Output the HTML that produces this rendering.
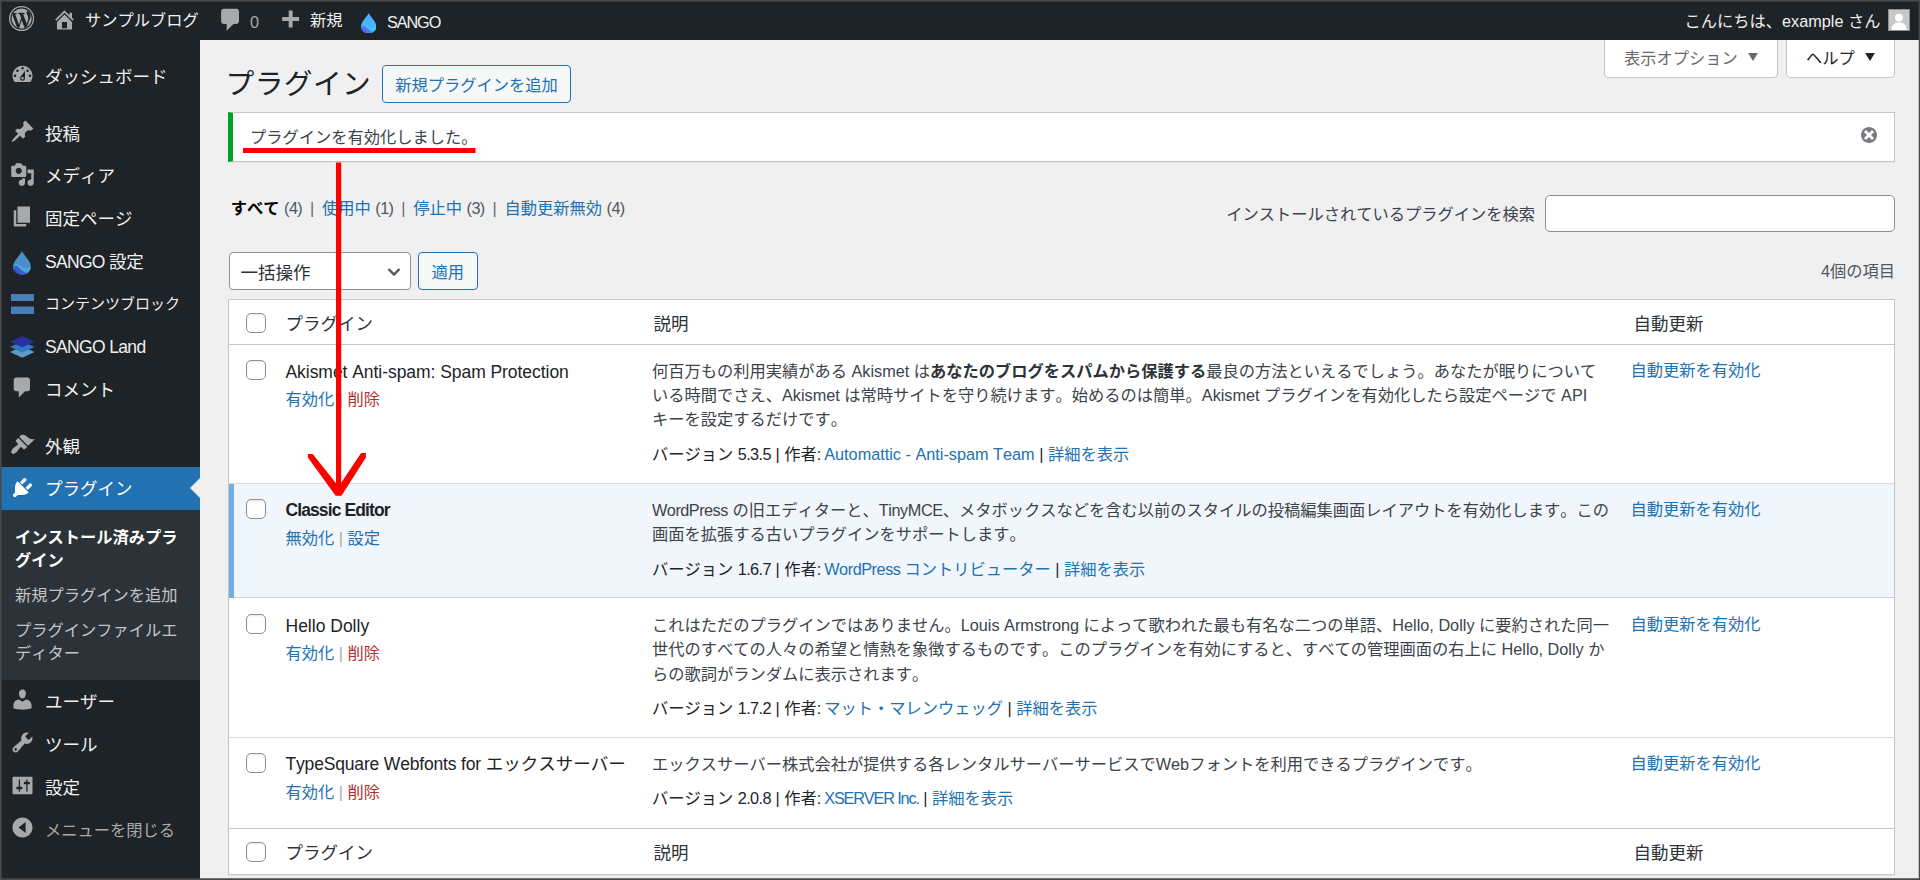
<!DOCTYPE html>
<html lang="ja">
<head>
<meta charset="utf-8">
<title>プラグイン ‹ サンプルブログ — WordPress</title>
<style>
*{box-sizing:border-box;}
html,body{margin:0;padding:0;}
body{width:1920px;height:880px;overflow:hidden;position:relative;background:#f0f0f1;color:#3c434a;
 font-family:"Liberation Sans","Noto Sans CJK JP",sans-serif;font-size:16.25px;line-height:22.75px;font-kerning:none;}
a{color:#2271b1;text-decoration:none;}
svg{display:block;}
/* ---------- admin bar ---------- */
#adminbar{position:absolute;left:0;top:0;width:1920px;height:40px;background:#1d2327;color:#f0f0f1;font-size:16.25px;line-height:40px;white-space:nowrap;}
#adminbar .ab{position:absolute;top:1.5px;height:40px;}
#adminbar svg{position:absolute;fill:#a7aaad;}
/* ---------- side menu ---------- */
#menu{position:absolute;left:0;top:40px;width:200px;height:840px;background:#1d2327;color:#f0f0f1;}
#menu ul{list-style:none;margin:15px 0 0;padding:0;}
#menu li.top{position:relative;height:42.75px;font-size:17.5px;line-height:22.75px;padding:11px 0 9px 45px;white-space:nowrap;}
#menu li.top svg{position:absolute;left:9.75px;top:7.25px;width:25px;height:25px;fill:#a7aaad;}
#menu li.sep{height:13.75px;}
#menu li.current{background:#2271b1;color:#fff;}
#menu li.current svg{fill:#fff;}
#menu li.current:after{content:"";position:absolute;right:0;top:50%;margin-top:-11px;border:10px solid transparent;border-right-color:#f0f0f1;}
#menu li.sub{background:#2c3338;padding:9.750px 0 9px;font-size:16.25px;line-height:22.75px;color:#c3c4c7;}
#menu li.sub div{padding:6.25px 15px;}
#menu li.sub div.cur{color:#fff;font-weight:700;}
#menu li.collapse{color:#a7aaad;font-size:16.25px;}
/* ---------- content ---------- */
#content{position:absolute;left:227.5px;top:40px;width:1667.5px;height:840px;}
.metalinks{position:absolute;top:0;right:0;height:36px;}
.metalinks div{position:absolute;top:0;height:37.500px;border:1px solid #c3c4c7;border-top:none;border-radius:0 0 5px 5px;background:#fff;color:#646970;font-size:16.25px;line-height:36.500px;white-space:nowrap;}
h1{position:absolute;left:-2px;top:26.250px;letter-spacing:0.400px;margin:0;font-size:28.75px;font-weight:400;line-height:37.375px;color:#1d2327;white-space:nowrap;}
.addnew{position:absolute;left:154.5px;top:25px;width:189px;height:37.5px;border:1px solid #2271b1;border-radius:4px;background:#f6f7f7;color:#2271b1;font-size:16.25px;line-height:39.500px;text-align:center;white-space:nowrap;}
.notice{position:absolute;left:0;top:72px;width:1667px;height:50px;background:#fff;border:1px solid #c3c4c7;border-left:5px solid #00a32a;box-shadow:0 1px 1px rgba(0,0,0,.04);}
.notice p{margin:0;position:absolute;left:17.5px;top:12px;line-height:24.375px;white-space:nowrap;}
.notice svg{position:absolute;right:15px;top:11.700px;width:20px;height:20px;fill:#787c82;}
.subsub{position:absolute;left:0;top:151.500px;line-height:32.5px;color:#646970;white-space:nowrap;}
.subsub b{color:#000;font-weight:700;}
.subsub .c{color:#50575e;letter-spacing:-0.550px;}
.subsub .l{padding:0 3.250px;}
.search label{position:absolute;right:360px;top:162px;line-height:25px;white-space:nowrap;}
.search div{position:absolute;right:0;top:155px;width:350px;height:36.500px;border:1px solid #8c8f94;border-radius:5px;background:#fff;}
.bulk{position:absolute;left:1px;top:212px;width:182px;height:37.5px;border:1px solid #8c8f94;border-radius:4px;background:#fff;color:#2c3338;font-size:17.5px;line-height:40px;padding-left:11px;}
.bulk svg{position:absolute;right:9px;top:11.500px;width:14px;height:14px;}
.apply{position:absolute;left:190.5px;top:212px;width:59.5px;height:37.5px;border:1px solid #2271b1;border-radius:4px;background:#f6f7f7;color:#2271b1;font-size:16.25px;line-height:38.500px;text-align:center;}
.count{position:absolute;right:0;top:220px;line-height:22.75px;color:#50575e;white-space:nowrap;}
/* table */
#tbl{position:absolute;left:0;top:259px;width:1667px;height:576px;background:#fff;border:1px solid #c3c4c7;box-shadow:0 1px 1px rgba(0,0,0,.04);}
.row{position:absolute;left:0;width:1665px;}
.row.head{border-bottom:1px solid #c3c4c7;color:#2c3338;font-size:17.5px;line-height:24.5px;}
.row.foot{border-top:1px solid #c3c4c7;color:#2c3338;font-size:17.5px;line-height:24.5px;}
.row.body{box-shadow:inset 0 -1px 0 rgba(0,0,0,.14);}
.row.active{background:#f0f6fc;border-left:5px solid #72aee6;}
.cb{position:absolute;left:17.5px;width:20px;height:20px;border:1px solid #8c8f94;border-radius:5px;background:#fff;box-shadow:inset 0 1px 2px rgba(0,0,0,.1);}
.row.active .cb{left:12.5px;}
.c1{position:absolute;left:57px;white-space:nowrap;}
.row.active .c1{left:52px;}
.c2{position:absolute;left:423.5px;width:965px;}
.row.active .c2{left:418.5px;}
.c3{position:absolute;left:1402px;white-space:nowrap;}
.row.active .c3{left:1397px;}
.name{font-size:17.5px;line-height:24.5px;color:#1d2327;margin-bottom:2px;}
.row.active .name{font-weight:700;letter-spacing:-0.900px;position:relative;top:-1.500px;}
.acts{font-size:16.25px;line-height:24.375px;color:#a7aaad;}
.acts .del{color:#b32d2e;}
.desc{font-size:16.25px;line-height:24.375px;color:#3c434a;}
.desc b{font-weight:700;color:#2c3338;}
.meta{font-size:16.25px;line-height:24.375px;color:#1d2327;white-space:nowrap;}
.meta .v{letter-spacing:-0.600px;}
.meta .au{margin-left:-1.500px;}
/* annotation + frame */
#annot{position:absolute;left:0;top:0;width:1920px;height:880px;pointer-events:none;}
#frame{position:absolute;left:0;top:0;width:1920px;height:880px;border-style:solid;border-color:#494949;border-width:1px;box-shadow:inset 1px 1px 0 rgba(74,74,74,.6),inset 0 -1px 0 rgba(74,74,74,.75),inset -1px 0 0 rgba(74,74,74,.25);pointer-events:none;}
</style>
</head>
<body>

<div id="adminbar">
  <svg style="left:8.700px;top:5.900px;width:25.200px;height:25.200px" viewBox="0 0 20 20"><defs><clipPath id="wc"><circle cx="10" cy="10" r="8.700"/></clipPath></defs><circle cx="10" cy="10" r="10"/><circle cx="10" cy="10" r="8.500" fill="none" stroke="#1d2327" stroke-width="0.900"/><g transform="translate(10 10) scale(0.905) translate(-10 -10)"><path clip-path="url(#wc)" fill="#1d2327" d="M20 10c0-5.51-4.49-10-10-10C4.48 0 0 4.49 0 10c0 5.52 4.48 10 10 10 5.51 0 10-4.48 10-10zM7.78 15.37L4.37 6.22c.55-.02 1.17-.08 1.17-.08.5-.06.44-1.13-.06-1.11 0 0-1.45.11-2.37.11-.18 0-.37 0-.58-.01C4.12 2.69 6.87 1.11 10 1.11c2.33 0 4.45.87 6.05 2.34-.68-.11-1.65.39-1.65 1.58 0 .74.45 1.36.9 2.1.35.61.55 1.36.55 2.46 0 1.49-1.4 5-1.4 5l-3.03-8.37c.54-.02.82-.17.82-.17.5-.05.44-1.25-.06-1.22 0 0-1.44.12-2.38.12-.87 0-2.33-.12-2.33-.12-.5-.03-.56 1.2-.06 1.22l.92.08 1.26 3.41zM17.41 10c.24-.64.74-1.87.43-4.25.7 1.29 1.05 2.71 1.05 4.25 0 3.29-1.73 6.24-4.4 7.78.97-2.59 1.94-5.2 2.92-7.78zM6.1 18.09C3.12 16.65 1.11 13.53 1.11 10c0-1.3.23-2.48.72-3.59C3.25 10.3 4.67 14.2 6.1 18.09zm4.03-6.63l2.58 6.98c-.86.29-1.76.45-2.71.45-.79 0-1.57-.11-2.29-.33.81-2.38 1.62-4.74 2.42-7.1z"/></g></svg>
  <svg style="left:52px;top:6.500px;width:25px;height:25px" viewBox="0 0 20 20"><path d="M16 8.5l1.53 1.53-1.06 1.06L10 4.62l-6.47 6.47-1.06-1.06L10 2.5l4 4v-2h2v4zm-6-2.46l6 5.99V18H4v-5.97zM12 17v-5H8v5h4z"/></svg>
  <span class="ab" style="left:85px;top:0.250px">サンプルブログ</span>
  <svg style="left:216.500px;top:5.500px;width:27.500px;height:27.500px" viewBox="0 0 20 20"><path d="M5 2h9c1.1 0 2 .9 2 2v7c0 1.1-.9 2-2 2h-2l-5 5v-5H5c-1.1 0-2-.9-2-2V4c0-1.1.9-2 2-2z"/></svg>
  <span class="ab" style="left:250px;color:#a7aaad">0</span>
  <svg style="left:277px;top:8px;width:26px;height:26px" viewBox="0 0 20 20"><path d="M17 7v3h-5v5H9v-5H4V7h5V2h3v5h5z"/></svg>
  <span class="ab" style="left:310px;top:0.250px">新規</span>
  <svg style="left:361px;top:12.800px;width:15.400px;height:20.400px" viewBox="0 0 30 40"><defs><clipPath id="dc"><path d="M15 0C12 7 0 17 0 26a15 14 0 0 0 30 0C30 17 18 7 15 0z"/></clipPath></defs><g clip-path="url(#dc)"><rect width="30" height="40" fill="#48b2ff"/><path d="M0 24c5-3 9-2 13 1s9 5 17 1v14H0z" fill="#3cc4fe"/><path d="M0 26c4-2 7-1 10 2s9 9 16 9l-4 3H0z" fill="#4a78f8"/><path d="M0 30c3 0 6 3 9 6l3 4H0z" fill="#4f5cf5"/></g></svg>
  <span class="ab" style="left:387px;letter-spacing:-1.100px">SANGO</span>
  <span class="ab" style="right:39.500px;top:1px">こんにちは、example さん</span>
  <div style="position:absolute;left:1888px;top:9px;width:22px;height:22px;border:1px solid #8c8f94;background:#c8c8c8;overflow:hidden">
    <svg style="left:0;top:0;width:20px;height:20px;fill:#fff" viewBox="0 0 20 20"><circle cx="10" cy="7.6" r="3.9"/><path d="M2.5 20c0-5 3-7.8 7.500-7.800S17.500 15 17.500 20z"/></svg>
  </div>
</div>

<div id="menu">
 <ul>
  <li class="top"><svg viewBox="0 0 20 20"><path d="M3.760 16h12.480c1.100-1.370 1.760-3.110 1.760-5 0-4.420-3.580-8-8-8s-8 3.580-8 8c0 1.890.66 3.630 1.760 5zM10 4c.55 0 1 .45 1 1s-.45 1-1 1-1-.45-1-1 .45-1 1-1zM6 6c.55 0 1 .45 1 1s-.45 1-1 1-1-.45-1-1 .45-1 1-1zm8 0c.55 0 1 .45 1 1s-.45 1-1 1-1-.45-1-1 .45-1 1-1zm-5.370 5.550L12 7v6c0 1.100-.9 2-2 2s-2-.9-2-2c0-.57.24-1.080.63-1.450zM4 10c.55 0 1 .45 1 1s-.45 1-1 1-1-.45-1-1 .45-1 1-1zm12 0c.55 0 1 .45 1 1s-.45 1-1 1-1-.45-1-1 .45-1 1-1zm-5 3c0-.55-.45-1-1-1s-1 .45-1 1 .45 1 1 1 1-.45 1-1z"/></svg>ダッシュボード</li>
  <li class="sep"></li>
  <li class="top"><svg viewBox="0 0 20 20"><path d="M10.440 3.020l1.820-1.820 6.360 6.350-1.830 1.820c-1.050-.68-2.480-.57-3.410.36l-.75.75c-.92.93-1.040 2.350-.35 3.410l-1.830 1.820-2.410-2.410-2.800 2.790c-.42.42-3.380 2.710-3.800 2.290s1.860-3.390 2.280-3.810l2.790-2.790L4.100 9.360l1.830-1.820c1.050.69 2.480.57 3.400-.36l.75-.75c.93-.92 1.050-2.350.36-3.410z"/></svg>投稿</li>
  <li class="top"><svg viewBox="0 0 20 20"><path d="M13 11V4c0-.55-.45-1-1-1h-1.670L9 1H5L3.670 3H2c-.55 0-1 .45-1 1v7c0 .55.45 1 1 1h10c.55 0 1-.45 1-1zM7 4.500c1.380 0 2.500 1.120 2.500 2.500S8.380 9.500 7 9.500 4.500 8.380 4.500 7 5.620 4.500 7 4.500zM14 6h5v10.500c0 1.380-1.120 2.500-2.500 2.500S14 17.880 14 16.500s1.120-2.500 2.500-2.500c.17 0 .34.02.5.05V9h-3V6zm-4 8.050V13h2v3.500c0 1.380-1.120 2.500-2.500 2.500S7 17.880 7 16.500 8.120 14 9.500 14c.17 0 .34.02.5.05z"/></svg>メディア</li>
  <li class="top"><svg viewBox="0 0 20 20"><path d="M6 15V2h10v13H6zm-1 1h8v2H3V5h2v11z"/></svg>固定ページ</li>
  <li class="top"><svg viewBox="0 0 30 40" style="left:12.500px;top:11.250px;width:18px;height:23.750px"><defs><clipPath id="dc2"><path d="M15 0C12 7 0 17 0 26a15 14 0 0 0 30 0C30 17 18 7 15 0z"/></clipPath></defs><g clip-path="url(#dc2)"><rect width="30" height="40" fill="#4a8fca"/><path d="M0 24c5-3 9-2 13 1s9 5 17 1v14H0z" fill="#4fa3d6"/><path d="M0 26c4-2 7-1 10 2s9 9 16 9l-4 3H0z" fill="#3560cc"/><path d="M0 30c3 0 6 3 9 6l3 4H0z" fill="#3448c2"/></g></svg><span style="letter-spacing:-0.700px">SANGO </span>設定</li>
  <li class="top" style="font-size:15px;padding-top:10px"><svg viewBox="0 0 23 20" style="left:11px;top:11.500px;width:23px;height:20px;fill:#4a7fb5"><rect x="0" y="0" width="23" height="7"/><rect x="0" y="12.500" width="23" height="7.500"/></svg>コンテンツブロック</li>
  <li class="top"><svg viewBox="0 0 24.500 21.750" style="left:10.250px;top:10.750px;width:24.500px;height:21.750px"><path fill="#5c9ccc" d="M12.250 10.400l12.250 5.700-12.250 5.650L0 16.100z"/><path fill="#2f7ac6" d="M12.250 5.200l12.250 5.700-12.250 5.650L0 10.900z"/><path fill="#2a2f9e" d="M12.250 0l12.250 5.700-12.250 5.650L0 5.700z"/></svg><span style="letter-spacing:-0.650px">SANGO Land</span></li>
  <li class="top"><svg viewBox="0 0 20 20"><path d="M5 2h9c1.100 0 2 .9 2 2v7c0 1.100-.9 2-2 2h-2l-5 5v-5H5c-1.100 0-2-.9-2-2V4c0-1.100.9-2 2-2z"/></svg>コメント</li>
  <li class="sep"></li>
  <li class="top"><svg viewBox="0 0 20 20"><path d="M14.480 11.060L7.410 3.990l1.500-1.500c.5-.56 2.300-.47 3.510.32 1.210.8 1.430 1.280 2.910 2.100 1.180.64 2.450 1.260 4.450.85zm-.71.71L6.700 4.700 4.930 6.470c-.39.39-.39 1.020 0 1.410l1.060 1.060c.39.39.39 1.030 0 1.420-.6.6-1.430 1.110-2.210 1.690-.35.26-.7.53-1.010.84C1.430 14.230.4 16.080 1.400 17.070c.99 1 2.840-.03 4.180-1.360.31-.31.58-.66.85-1.020.57-.78 1.080-1.610 1.690-2.210.39-.39 1.020-.39 1.410 0l1.060 1.060c.39.39 1.020.39 1.410 0z"/></svg>外観</li>
  <li class="top current"><svg viewBox="0 0 20 20"><path d="M13.110 4.360L9.870 7.600 8 5.730l3.240-3.240c.35-.34 1.050-.2 1.560.32.520.51.66 1.210.31 1.550zm-8 1.770l.91-1.120 9.010 9.010-1.190.84c-.71.71-2.630 1.160-3.820 1.160H6.140L4.900 17.260c-.59.59-1.540.59-2.120 0-.59-.58-.59-1.530 0-2.120l1.240-1.240v-3.880c0-1.130.4-3.190 1.090-3.890zm7.260 3.970l3.240-3.240c.34-.35 1.040-.21 1.550.31.520.51.66 1.210.31 1.550l-3.240 3.250z"/></svg>プラグイン</li>
  <li class="sub">
    <div class="cur">インストール済みプラ<br>グイン</div>
    <div>新規プラグインを追加</div>
    <div>プラグインファイルエ<br>ディター</div>
  </li>
  <li class="top"><svg viewBox="0 0 20 20"><path d="M10 9.250c-2.270 0-2.730-3.440-2.730-3.440C7 4.020 7.820 2 9.970 2c2.160 0 2.980 2.020 2.710 3.810 0 0-.41 3.440-2.680 3.440zm0 2.570L12.720 10c2.390 0 4.520 2.330 4.520 4.530v2.490s-3.650 1.130-7.240 1.130c-3.650 0-7.240-1.130-7.240-1.130v-2.490c0-2.250 1.940-4.480 4.470-4.480z"/></svg>ユーザー</li>
  <li class="top"><svg viewBox="0 0 20 20"><path d="M16.680 9.770c-1.340 1.340-3.300 1.670-4.950.99l-5.410 6.520c-.99.99-2.590.99-3.580 0s-.99-2.590 0-3.570l6.520-5.420c-.68-1.650-.35-3.610.99-4.950 1.280-1.280 3.120-1.620 4.720-1.060l-2.890 2.890 2.820 2.820 2.860-2.870c.53 1.580.18 3.390-1.080 4.650zM3.810 16.210c.4.39 1.040.39 1.430 0 .4-.4.4-1.040 0-1.430-.39-.4-1.030-.4-1.430 0-.39.39-.39 1.030 0 1.430z"/></svg>ツール</li>
  <li class="top"><svg viewBox="0 0 20 20"><path d="M18 16V4c0-.55-.45-1-1-1H3c-.55 0-1 .45-1 1v12c0 .55.45 1 1 1h14c.55 0 1-.45 1-1zM8 11h1c.55 0 1 .45 1 1s-.45 1-1 1H8v1.500c0 .28-.22.5-.5.5s-.5-.22-.5-.5V13H6c-.55 0-1-.45-1-1s.45-1 1-1h1V5.500c0-.28.22-.5.5-.5s.5.22.5.5V11zm5-2h-1c-.55 0-1-.45-1-1s.45-1 1-1h1V5.500c0-.28.22-.5.5-.5s.5.22.5.5V7h1c.55 0 1 .45 1 1s-.45 1-1 1h-1v5.500c0 .28-.22.5-.5.5s-.5-.22-.5-.5V9z"/></svg>設定</li>
  <li class="top collapse"><svg viewBox="0 0 20 20" style="top:6.500px"><path d="M10 2.020c-4.420 0-8 3.580-8 8s3.580 8 8 8 8-3.580 8-8-3.580-8-8-8zM12.500 14.400L6.800 10l5.700-4.400v8.800z"/></svg>メニューを閉じる</li>
 </ul>
</div>

<div id="content">
  <div class="metalinks">
    <div style="right:117px;width:174.500px;padding-left:19.500px">表示オプション <svg style="position:absolute;right:19.500px;top:13px;width:10px;height:8px;fill:#646970" viewBox="0 0 11 9"><path d="M0 0h11L5.500 9z"/></svg></div>
    <div style="right:0;width:109px;padding-left:19px;color:#1d2327">ヘルプ <svg style="position:absolute;right:19.500px;top:13px;width:10px;height:8px;fill:#1d2327" viewBox="0 0 11 9"><path d="M0 0h11L5.500 9z"/></svg></div>
  </div>
  <h1>プラグイン</h1>
  <div class="addnew">新規プラグインを追加</div>
  <div class="notice"><p>プラグインを有効化しました。</p>
    <svg viewBox="0 0 20 20"><path d="M10 2c4.420 0 8 3.580 8 8s-3.580 8-8 8-8-3.580-8-8 3.580-8 8-8zm5 11l-3-3 3-3-2-2-3 3-3-3-2 2 3 3-3 3 2 2 3-3 3 3z"/></svg>
  </div>
  <div class="subsub"><span class="l"><b>すべて</b> <span class="c">(4)</span></span> | <span class="l"><a>使用中</a> <span class="c">(1)</span></span> | <span class="l"><a>停止中</a> <span class="c">(3)</span></span> | <span class="l"><a>自動更新無効</a> <span class="c">(4)</span></span></div>
  <div class="search"><label>インストールされているプラグインを検索</label><div></div></div>
  <div class="bulk">一括操作<svg viewBox="0 0 14 14"><path d="M1.500 4l5.500 5.500L12.500 4" fill="none" stroke="#50575e" stroke-width="2.400"/></svg></div>
  <div class="apply">適用</div>
  <div class="count">4個の項目</div>

  <div id="tbl">
    <div class="row head" style="top:0;height:45px"><span class="cb" style="top:13px"></span><span class="c1" style="top:11.500px">プラグイン</span><span class="c2" style="top:11.500px;margin-left:1.500px">説明</span><span class="c3" style="top:11.500px;margin-left:3px">自動更新</span></div>

    <div class="row body" style="top:45px;height:139px">
      <span class="cb" style="top:15px"></span>
      <div class="c1" style="top:15.250px"><div class="name" style="letter-spacing:-0.050px">Akismet Anti-spam: Spam Protection</div><div class="acts"><a>有効化</a> | <a class="del">削除</a></div></div>
      <div class="c2" style="top:13.500px"><div class="desc">何百万もの利用実績がある Akismet は<b>あなたのブログをスパムから保護する</b>最良の方法といえるでしょう。あなたが眠りについて<br>いる時間でさえ、Akismet は常時サイトを守り続けます。始めるのは簡単。Akismet プラグインを有効化したら設定ページで API<br>キーを設定するだけです。</div>
        <div class="meta" style="margin-top:10px">バージョン <span class="v">5.3.5</span> | 作者: <a class="au">Automattic - Anti-spam Team</a> | <a>詳細を表示</a></div></div>
      <div class="c3" style="top:13.500px"><a>自動更新を有効化</a></div>
    </div>

    <div class="row body active" style="top:184px;height:114px">
      <span class="cb" style="top:15px"></span>
      <div class="c1" style="top:15.250px"><div class="name">Classic Editor</div><div class="acts"><a>無効化</a> | <a>設定</a></div></div>
      <div class="c2" style="top:14px"><div class="desc"><span style="letter-spacing:-0.500px">WordPress</span> の旧エディターと、<span style="letter-spacing:-0.400px">TinyMCE</span>、メタボックスなどを含む以前のスタイルの投稿編集画面レイアウトを有効化します。この<br>画面を拡張する古いプラグインをサポートします。</div>
        <div class="meta" style="margin-top:10px">バージョン <span class="v">1.6.7</span> | 作者: <a class="au"><span style="letter-spacing:-0.450px">WordPress </span>コントリビューター</a> | <a>詳細を表示</a></div></div>
      <div class="c3" style="top:14px"><a>自動更新を有効化</a></div>
    </div>

    <div class="row body" style="top:298px;height:140px">
      <span class="cb" style="top:16px"></span>
      <div class="c1" style="top:16.250px"><div class="name">Hello Dolly</div><div class="acts"><a>有効化</a> | <a class="del">削除</a></div></div>
      <div class="c2" style="top:14.750px"><div class="desc">これはただのプラグインではありません。Louis Armstrong によって歌われた最も有名な二つの単語、Hello, Dolly に要約された同一<br>世代のすべての人々の希望と情熱を象徴するものです。このプラグインを有効にすると、すべての管理画面の右上に Hello, Dolly か<br>らの歌詞がランダムに表示されます。</div>
        <div class="meta" style="margin-top:10px">バージョン <span class="v">1.7.2</span> | 作者: <a class="au">マット・マレンウェッグ</a> | <a>詳細を表示</a></div></div>
      <div class="c3" style="top:14.750px"><a>自動更新を有効化</a></div>
    </div>

    <div class="row body" style="top:438px;height:90px;box-shadow:none">
      <span class="cb" style="top:15px"></span>
      <div class="c1" style="top:15.250px"><div class="name" style="position:relative;top:-1px"><span style="letter-spacing:-0.170px">TypeSquare Webfonts for </span>エックスサーバー</div><div class="acts"><a>有効化</a> | <a class="del">削除</a></div></div>
      <div class="c2" style="top:13.500px"><div class="desc">エックスサーバー株式会社が提供する各レンタルサーバーサービスでWebフォントを利用できるプラグインです。</div>
        <div class="meta" style="margin-top:10px">バージョン <span class="v">2.0.8</span> | 作者: <a class="au" style="letter-spacing:-1.150px">XSERVER Inc.</a> | <a>詳細を表示</a></div></div>
      <div class="c3" style="top:13.500px"><a>自動更新を有効化</a></div>
    </div>

    <div class="row foot" style="top:528px;height:46px"><span class="cb" style="top:13px"></span><span class="c1" style="top:11.500px">プラグイン</span><span class="c2" style="top:11.500px;margin-left:1.500px">説明</span><span class="c3" style="top:11.500px;margin-left:3px">自動更新</span></div>
  </div>
</div>

<svg id="annot" viewBox="0 0 1920 880">
  <g fill="#fe0000">
    <rect x="243" y="148" width="232.500" height="5"/>
    <path d="M336 162.500H341.200V482.800L361.100 453.100H365.900V457.400L341.500 495.800H335.600L307.900 457.400V454H312.700L336 483.200z"/>
  </g>
</svg>
<div id="frame"></div>
</body>
</html>
